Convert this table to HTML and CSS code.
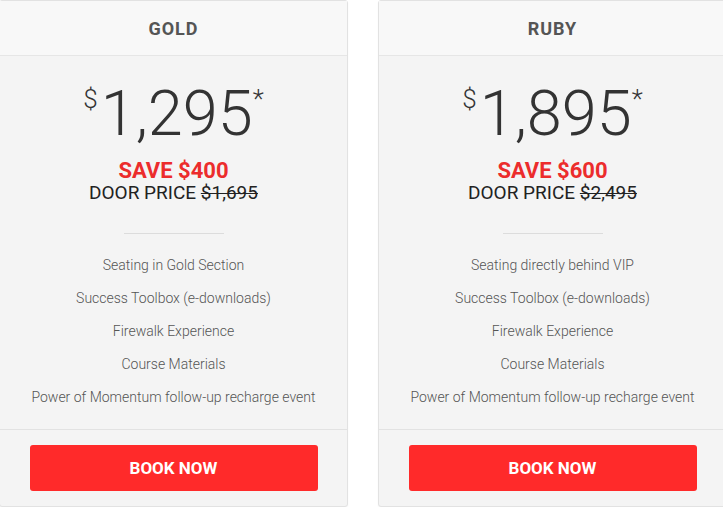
FILE: index.html
```html
<!DOCTYPE html>
<html>
<head>
<meta charset="utf-8">
<link rel="stylesheet" href="styles.css">
</head>
<body>
<div class="plans">
  <div class="card">
    <div class="card-head">GOLD</div>
    <div class="card-body">
      <div class="price"><span class="cur">$</span>1,295<span class="ast">*</span></div>
      <div class="save">SAVE $400</div>
      <div class="door">DOOR PRICE <s>$1,695</s></div>
      <div class="divider"></div>
      <ul class="features">
        <li>Seating in Gold Section</li>
        <li>Success Toolbox (e-downloads)</li>
        <li>Firewalk Experience</li>
        <li>Course Materials</li>
        <li>Power of Momentum follow-up recharge event</li>
      </ul>
    </div>
    <div class="card-foot"><a class="btn" href="#">BOOK NOW</a></div>
  </div>
  <div class="card">
    <div class="card-head">RUBY</div>
    <div class="card-body">
      <div class="price"><span class="cur">$</span>1,895<span class="ast">*</span></div>
      <div class="save">SAVE $600</div>
      <div class="door">DOOR PRICE <s>$2,495</s></div>
      <div class="divider"></div>
      <ul class="features">
        <li>Seating directly behind VIP</li>
        <li>Success Toolbox (e-downloads)</li>
        <li>Firewalk Experience</li>
        <li>Course Materials</li>
        <li>Power of Momentum follow-up recharge event</li>
      </ul>
    </div>
    <div class="card-foot"><a class="btn" href="#">BOOK NOW</a></div>
  </div>
</div>
</body>
</html>
```
FILE: styles.css
```css
html, body {
  margin: 0;
  padding: 0;
  background: #ffffff;
  font-family: Roboto, "Liberation Sans", sans-serif;
  overflow: hidden;
}
.plans {
  display: flex;
  gap: 30px;
  margin-left: -1px;
}
.card {
  flex: 0 0 349px;
  box-sizing: border-box;
  border: 1px solid #e2e2e2;
  border-radius: 3px;
  background: #f4f4f4;
  height: 507px;
  display: flex;
  flex-direction: column;
  box-shadow: 0 1px 2px rgba(0,0,0,0.04);
}
.card-head {
  height: 54px;
  background: #f8f8f8;
  border-bottom: 1px solid #e6e6e6;
  display: flex;
  align-items: center;
  justify-content: center;
  font-weight: 700;
  font-size: 18px;
  letter-spacing: 1px;
  color: #555;
}
.card-body {
  flex: 1;
  text-align: center;
  padding-top: 25px;
}
.price {
  font-size: 63px;
  font-weight: 300;
  line-height: 66px;
  color: #333;
}
.cur {
  font-size: 26px;
  vertical-align: top;
  line-height: 36px;
  margin-right: 3px;
}
.ast {
  font-size: 26px;
  vertical-align: top;
  line-height: 36px;
}
.save {
  margin-top: 13px;
  font-size: 22px;
  font-weight: 700;
  line-height: 22px;
  color: #ec2c2c;
}
.door {
  margin-top: 1px;
  font-size: 19px;
  line-height: 20px;
  color: #222;
}
.door s {
  text-decoration-thickness: 1px;
}
.divider {
  width: 100px;
  height: 1px;
  background: #dcdcdc;
  margin: 30px auto 0;
}
.features {
  list-style: none;
  margin: 15px 0 0;
  padding: 0;
  font-size: 14px;
  font-weight: 300;
  color: #555;
}
.features li {
  line-height: 33px;
}
.card-foot {
  border-top: 1px solid #e2e2e2;
  padding: 15px 0 15px;
  display: flex;
  justify-content: center;
}
.btn {
  display: flex;
  align-items: center;
  justify-content: center;
  width: 288px;
  height: 46px;
  background: #ff2a2a;
  border-radius: 3px;
  color: #fff;
  font-weight: 700;
  font-size: 17px;
  text-decoration: none;
}
```
